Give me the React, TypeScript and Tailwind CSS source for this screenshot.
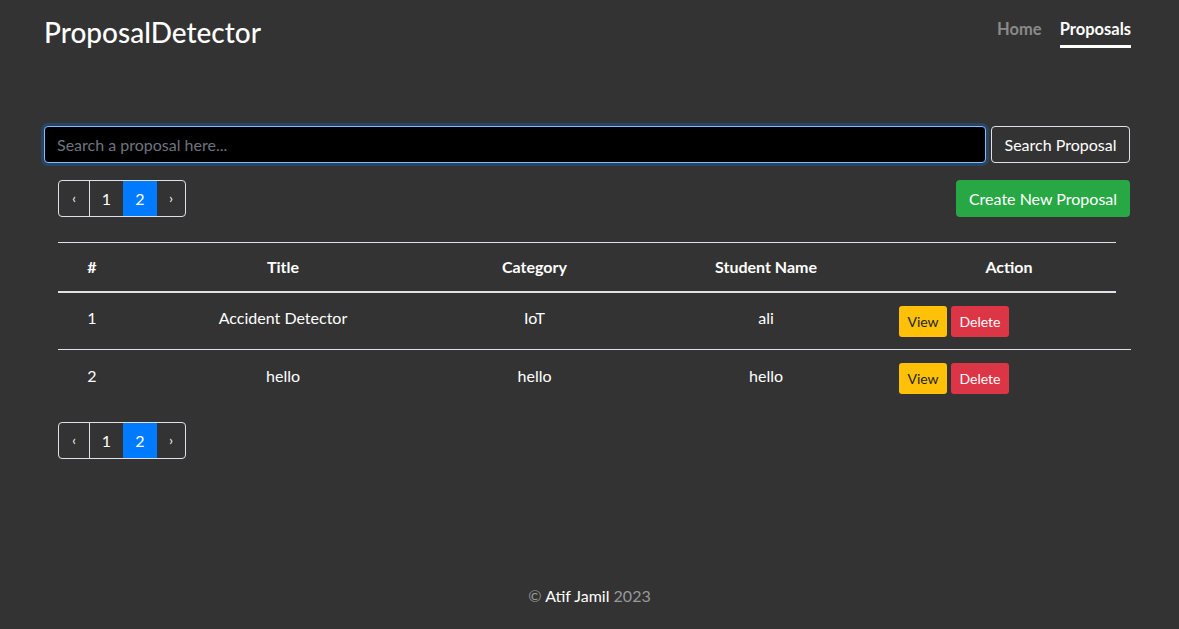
import React from "react";

const font = { fontFamily: "Lato, 'Open Sans', sans-serif" };

function Pager() {
  return (
    <div className="flex h-[37px] w-[128px] rounded-[4px] border border-[#dee2e6] overflow-hidden text-white">
      <div className="w-[31px] flex items-center justify-center border-r border-[#dee2e6] text-[13px]">‹</div>
      <div className="w-[33px] flex items-center justify-center text-[16px]">1</div>
      <div className="w-[34px] flex items-center justify-center bg-[#007bff] text-[16px]">2</div>
      <div className="flex-1 flex items-center justify-center text-[13px]">›</div>
    </div>
  );
}

const rows = [
  { n: "1", title: "Accident Detector", cat: "IoT", student: "ali" },
  { n: "2", title: "hello", cat: "hello", student: "hello" },
];

export default function App() {
  return (
    <div className="min-h-[629px] bg-[#333333] text-white flex flex-col" style={font}>
      <header className="flex items-start justify-between pl-[44px] pr-[48px] pt-[14px]">
        <div className="text-[28px] leading-[36px] font-medium">ProposalDetector</div>
        <nav className="flex gap-[18px] pt-[5px] text-[16.5px] font-bold">
          <span className="text-[#8a8a8a] leading-[20px]">Home</span>
          <span className="leading-[20px] border-b-[3px] border-white pb-[6px]">Proposals</span>
        </nav>
      </header>

      <div className="pl-[44px] pr-[49px] pt-[76px]">
        <div className="flex gap-[5px]">
          <div className="flex-1 h-[37px] bg-black rounded-[4px] border border-[#80bdff] shadow-[0_0_0_3px_rgba(0,123,255,0.25)] flex items-center px-[12px] text-[16px] text-[#6c757d]">
            Search a proposal here...
          </div>
          <button className="w-[139px] h-[37px] rounded-[4px] border border-[#dee2e6] text-[16px] text-white">
            Search Proposal
          </button>
        </div>

        <div className="flex justify-between items-center mt-[17px] pl-[14px]">
          <Pager />
          <button className="h-[37px] w-[174px] rounded-[4px] bg-[#28a745] text-[16px] text-white">
            Create New Proposal
          </button>
        </div>

        <div className="mt-[25px] ml-[14px] w-[1073px]">
          <div className="grid grid-cols-[68px_314px_189px_258px_229px] w-[1058px] h-[51px] border-t border-[#dee2e6] border-b-2 items-center font-bold text-[16px]">
            <div className="text-center">#</div>
            <div className="text-center">Title</div>
            <div className="text-center">Category</div>
            <div className="text-center pl-[16px]">Student Name</div>
            <div className="text-center pl-[15px]">Action</div>
          </div>
          {rows.map((r, i) => (
            <div
              key={r.n}
              className={`grid grid-cols-[68px_314px_189px_258px_244px] h-[57px] items-center text-[16px] ${i === 0 ? "border-b border-[#dee2e6]" : ""}`}
            >
              <div className="text-center pb-[6px]">{r.n}</div>
              <div className="text-center pb-[6px]">{r.title}</div>
              <div className="text-center pb-[6px]">{r.cat}</div>
              <div className="text-center pb-[6px] pl-[16px]">{r.student}</div>
              <div className="flex gap-[4px] pl-[12px]">
                <button className="h-[31px] w-[48px] rounded-[3px] bg-[#ffc107] text-[#212529] text-[14px]">View</button>
                <button className="h-[31px] w-[58px] rounded-[3px] bg-[#dc3545] text-white text-[14px]">Delete</button>
              </div>
            </div>
          ))}
        </div>

        <div className="mt-[15px] pl-[14px]">
          <Pager />
        </div>
      </div>

      <footer className="mt-[125px] text-center text-[16px] text-[#999999]">
        © <span className="text-white">Atif Jamil</span> 2023
      </footer>
    </div>
  );
}
